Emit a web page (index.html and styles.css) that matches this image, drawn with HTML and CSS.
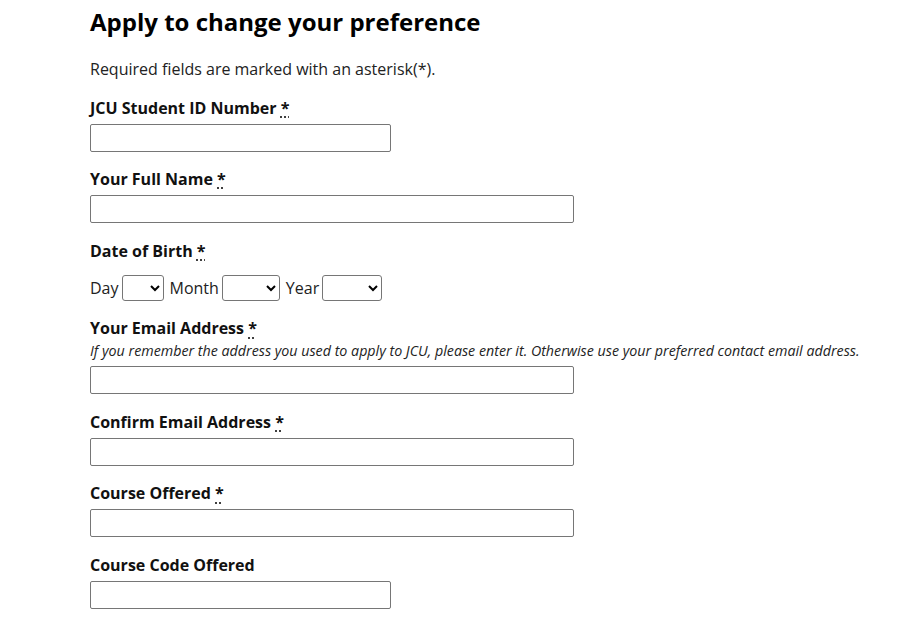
FILE: index.html
```html
<!DOCTYPE html>
<html lang="en">
<head>
  <meta charset="UTF-8">
  <title>Apply to change your preference</title>
  <link rel="stylesheet" href="styles.css">
</head>
<body>
  <main class="form-page">
    <h1>Apply to change your preference</h1>
    <p class="intro">Required fields are marked with an asterisk(*).</p>

    <form class="pref-form">
      <div class="field">
        <label for="student-id">JCU Student ID Number <abbr title="required">*</abbr></label>
        <input type="text" id="student-id" class="input-short">
      </div>

      <div class="field">
        <label for="full-name">Your Full Name <abbr title="required">*</abbr></label>
        <input type="text" id="full-name" class="input-long">
      </div>

      <div class="field">
        <label>Date of Birth <abbr title="required">*</abbr></label>
        <div class="dob">
          <span>Day</span>
          <select class="sel-day"><option></option></select>
          <span>Month</span>
          <select class="sel-month"><option></option></select>
          <span>Year</span>
          <select class="sel-year"><option></option></select>
        </div>
      </div>

      <div class="field">
        <label for="email">Your Email Address <abbr title="required">*</abbr></label>
        <p class="hint">If you remember the address you used to apply to JCU, please enter it. Otherwise use your preferred contact email address.</p>
        <input type="email" id="email" class="input-long">
      </div>

      <div class="field">
        <label for="email2">Confirm Email Address <abbr title="required">*</abbr></label>
        <input type="email" id="email2" class="input-long">
      </div>

      <div class="field">
        <label for="course">Course Offered <abbr title="required">*</abbr></label>
        <input type="text" id="course" class="input-long">
      </div>

      <div class="field">
        <label for="course-code">Course Code Offered</label>
        <input type="text" id="course-code" class="input-short">
      </div>
    </form>
  </main>
</body>
</html>
```

FILE: styles.css
```css
* {
  margin: 0;
  padding: 0;
  box-sizing: border-box;
}

body {
  font-family: 'Open Sans', sans-serif;
  font-size: 16px;
  color: #222;
  background: #fff;
}

.form-page {
  padding: 6px 0 0 90px;
}

h1 {
  font-size: 24px;
  font-weight: 700;
  line-height: 32px;
  color: #000;
}

.intro {
  margin-top: 20px;
  line-height: 22px;
}

.pref-form {
  margin-top: 16.5px;
}

.field {
  margin-bottom: 16.6px;
}

.field label {
  display: block;
  font-weight: 700;
  line-height: 22px;
  margin-bottom: 5px;
  color: #111;
}

abbr[title] {
  text-decoration: underline dotted;
  text-underline-offset: 3px;
}

.hint {
  font-style: italic;
  font-size: 14.25px;
  line-height: 20px;
  margin: -3px 0 5px;
  color: #222;
}

input {
  display: block;
  height: 28px;
  border: 1px solid #767676;
  border-radius: 2px;
  font: inherit;
  padding: 2px 4px;
}

.input-short {
  width: 301px;
}

.input-long {
  width: 484px;
}

.dob {
  display: flex;
  align-items: center;
  gap: 3px;
  margin-top: 13px;
  line-height: 26px;
}

.dob span {
  margin-left: 3px;
}

.dob span:first-child {
  margin-left: 0;
}

select {
  height: 26px;
  border: 1px solid #767676;
  border-radius: 3px;
  background: #fff;
  font: inherit;
  font-size: 14px;
}

.sel-day {
  width: 42px;
}

.sel-month {
  width: 58px;
}

.sel-year {
  width: 60px;
}
```
